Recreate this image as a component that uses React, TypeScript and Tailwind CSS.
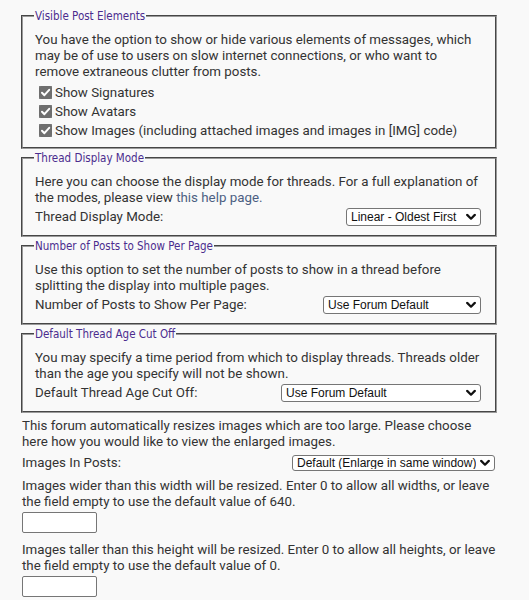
import { useState } from "react";

type Option = { value: string; label: string };

function Chevron() {
  return (
    <svg width="10" height="7" viewBox="0 0 10 7" className="pointer-events-none absolute right-[5px] top-1/2 -translate-y-1/2">
      <path d="M1.2 1.4 L5 5.2 L8.8 1.4" fill="none" stroke="#111" strokeWidth="2.2" strokeLinecap="round" strokeLinejoin="round" />
    </svg>
  );
}

function Select({ options, width, height = "h-[18px]" }: { options: Option[]; width: string; height?: string }) {
  const [value, setValue] = useState(options[0].value);
  return (
    <div className={`relative ${width}`}>
      <select
        value={value}
        onChange={(e) => setValue(e.target.value)}
        className={`block w-full ${height} appearance-none rounded-[3px] border border-[#767676] bg-white pl-[4px] pr-[18px] font-['Liberation_Sans',Arial,sans-serif] text-[12px] leading-none text-[#111] outline-none`}
      >
        {options.map((o) => (
          <option key={o.value} value={o.value}>
            {o.label}
          </option>
        ))}
      </select>
      <Chevron />
    </div>
  );
}

function Check({ label }: { label: string }) {
  const [on, setOn] = useState(true);
  return (
    <label className="ml-[4px] flex h-[19px] cursor-pointer items-center gap-[2px]" onClick={() => setOn(!on)}>
      <svg width="13" height="13" viewBox="0 0 13 13" className="shrink-0">
        <rect x="0" y="0" width="13" height="13" rx="2" fill={on ? "#6f6f6f" : "#fff"} stroke="#6f6f6f" />
        {on && <path d="M3 6.8 L5.4 9.2 L10.2 3.8" fill="none" stroke="#fff" strokeWidth="2" strokeLinecap="round" strokeLinejoin="round" />}
      </svg>
      <span className="ml-[1px]">{label}</span>
    </label>
  );
}

function Group({ title, children, pb = "pb-[8px]" }: { title: string; children: React.ReactNode; pb?: string }) {
  return (
    <fieldset className={`mt-[2px] min-w-0 border-2 border-[#9a9a9a] [border-style:groove] pl-[12px] pr-[14px] pt-[9px] ${pb}`}>
      <legend className="-ml-[1px] px-[1px] font-['DejaVu_Sans','Roboto',sans-serif] text-[11.5px] leading-[14px] text-[#4b2c8e] [font-stretch:condensed]">
        {title}
      </legend>
      {children}
    </fieldset>
  );
}

function Row({ label, children }: { label: string; children: React.ReactNode }) {
  return (
    <div className="mt-[1px] flex h-[20px] items-center justify-between">
      <span>{label}</span>
      {children}
    </div>
  );
}

const forumDefault = [
  { value: "default", label: "Use Forum Default" },
  { value: "10", label: "Show 10 posts" },
  { value: "20", label: "Show 20 posts" },
];

export default function App() {
  return (
    <div className="min-h-screen bg-[#f9f9f9] font-['Roboto','Liberation_Sans',sans-serif] text-[13.33px] leading-[16px] text-[#333]">
      <div className="ml-[21px] pt-[7px]">
        <div className="w-[476px]">
          <Group title="Visible Post Elements" pb="pb-[7px]">
            <p>
              You have the option to show or hide various elements of messages, which may be of use to users on slow
              internet connections, or who want to remove extraneous clutter from posts.
            </p>
            <div className="mt-[3px]">
              <Check label="Show Signatures" />
              <Check label="Show Avatars" />
              <Check label="Show Images (including attached images and images in [IMG] code)" />
            </div>
          </Group>

          <Group title="Thread Display Mode">
            <p>
              Here you can choose the display mode for threads. For a full explanation of the modes, please view{" "}
              <a href="#" className="text-[#4c5f82]">
                this help page.
              </a>
            </p>
            <Row label="Thread Display Mode:">
              <Select
                width="w-[135px]"
                options={[
                  { value: "linear-old", label: "Linear - Oldest First" },
                  { value: "linear-new", label: "Linear - Newest First" },
                  { value: "threaded", label: "Threaded" },
                  { value: "hybrid", label: "Hybrid" },
                ]}
              />
            </Row>
          </Group>

          <Group title="Number of Posts to Show Per Page">
            <p>
              Use this option to set the number of posts to show in a thread before splitting the display into multiple
              pages.
            </p>
            <Row label="Number of Posts to Show Per Page:">
              <Select width="w-[158px]" options={forumDefault} />
            </Row>
          </Group>

          <Group title="Default Thread Age Cut Off">
            <p>
              You may specify a time period from which to display threads. Threads older than the age you specify will
              not be shown.
            </p>
            <Row label="Default Thread Age Cut Off:">
              <Select width="w-[200px]" options={forumDefault} />
            </Row>
          </Group>
        </div>

        <div className="mt-[5px] pl-[1px]">
          <p className="w-[471px]">
            This forum automatically resizes images which are too large. Please choose here how you would like to view
            the enlarged images.
          </p>
          <div className="mt-[4px] flex h-[18px] w-[473px] items-center justify-between">
            <span>Images In Posts:</span>
            <Select
              width="w-[203px]"
              height="h-[16px]"
              options={[
                { value: "same", label: "Default (Enlarge in same window)" },
                { value: "new", label: "Enlarge in new window" },
                { value: "none", label: "Do not resize" },
              ]}
            />
          </div>
          <p className="mt-[6px] w-[481px]">
            Images wider than this width will be resized. Enter 0 to allow all widths, or leave the field empty to use
            the default value of 640.
          </p>
          <input type="text" className="mt-[2px] block h-[21px] w-[75px] rounded-[2px] border border-[#767676] bg-white px-1 outline-none" />
          <p className="mt-[9px] w-[486px]">
            Images taller than this height will be resized. Enter 0 to allow all heights, or leave the field empty to use
            the default value of 0.
          </p>
          <input type="text" className="mt-[2px] block h-[21px] w-[75px] rounded-[2px] border border-[#767676] bg-white px-1 outline-none" />
        </div>
      </div>
    </div>
  );
}
